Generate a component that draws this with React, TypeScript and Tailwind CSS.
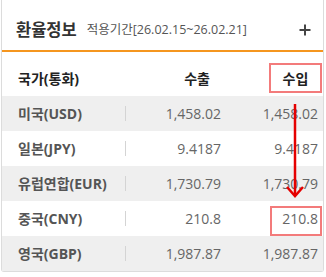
import React from "react";

type Rate = {
  country: string;
  exportRate: string;
  importRate: string;
  highlight?: boolean;
};

const rates: Rate[] = [
  { country: "미국(USD)", exportRate: "1,458.02", importRate: "1,458.02" },
  { country: "일본(JPY)", exportRate: "9.4187", importRate: "9.4187" },
  { country: "유럽연합(EUR)", exportRate: "1,730.79", importRate: "1,730.79" },
  { country: "중국(CNY)", exportRate: "210.8", importRate: "210.8", highlight: true },
  { country: "영국(GBP)", exportRate: "1,987.87", importRate: "1,987.87" },
];

const font = { fontFamily: '"Open Sans", "Noto Sans CJK KR", sans-serif' };

const App: React.FC = () => {
  return (
    <div className="bg-white w-[326px] h-[277px]" style={font}>
      <div className="relative ml-[1px] w-[323px] border-x border-b border-[#dcdcdc] rounded-b-[3px] bg-white">
        <div className="flex items-center h-[52px] pt-[10px] pl-[14px] pr-[12px] border-b-2 border-[#f5961f]">
          <h2 className="text-[16.5px] font-bold text-[#333]">환율정보</h2>
          <span className="ml-[10px] text-[12.5px] text-[#555]">적용기간[26.02.15~26.02.21]</span>
          <svg className="ml-auto" width="12" height="12" viewBox="0 0 12 12">
            <path d="M6 0.5V11.5M0.5 6H11.5" stroke="#444" strokeWidth="2" />
          </svg>
        </div>

        <div className="flex items-center h-[44px] pt-[8px] text-[14px] font-bold text-[#222]">
          <div className="w-[123px] pl-[16px]">국가(통화)</div>
          <div className="w-px" />
          <div className="w-[96px] text-right pr-[12px]">수출</div>
          <div className="flex-1 flex">
            <div className="ml-auto mr-[1px] w-[53px] h-[30px] border-2 border-[#f37b7b] flex items-center justify-center">
              수입
            </div>
          </div>
        </div>

        {rates.map((rate, i) => (
          <div
            key={rate.country}
            className={`flex items-center h-[35px] ${i % 2 === 0 ? "bg-[#efefef]" : "bg-white"}`}
          >
            <div className="w-[123px] pl-[16px] text-[14px] font-bold text-[#555]">{rate.country}</div>
            <div className="w-px h-[15px] bg-[#d4d4d4]" />
            <div className="w-[96px] text-right pr-[1px] text-[14px] text-[#666]">{rate.exportRate}</div>
            <div className="flex-1 h-full flex items-center text-[14px] text-[#666]">
              {rate.highlight ? (
                <div className="ml-auto mr-[1px] self-end w-[52px] h-[30px] border-2 border-[#f37b7b] flex items-center justify-end pr-[2px] pb-[5px]">
                  {rate.importRate}
                </div>
              ) : (
                <div className="ml-auto pr-[5px]">{rate.importRate}</div>
              )}
            </div>
          </div>
        ))}

        <svg className="absolute inset-0 pointer-events-none" width="323" height="274" viewBox="0 0 323 274">
          <path d="M293 104V195" stroke="#e50000" strokeWidth="2.5" />
          <path d="M285 187L293 196L301 187" fill="none" stroke="#e50000" strokeWidth="2.5" />
        </svg>
      </div>
    </div>
  );
};

export default App;
